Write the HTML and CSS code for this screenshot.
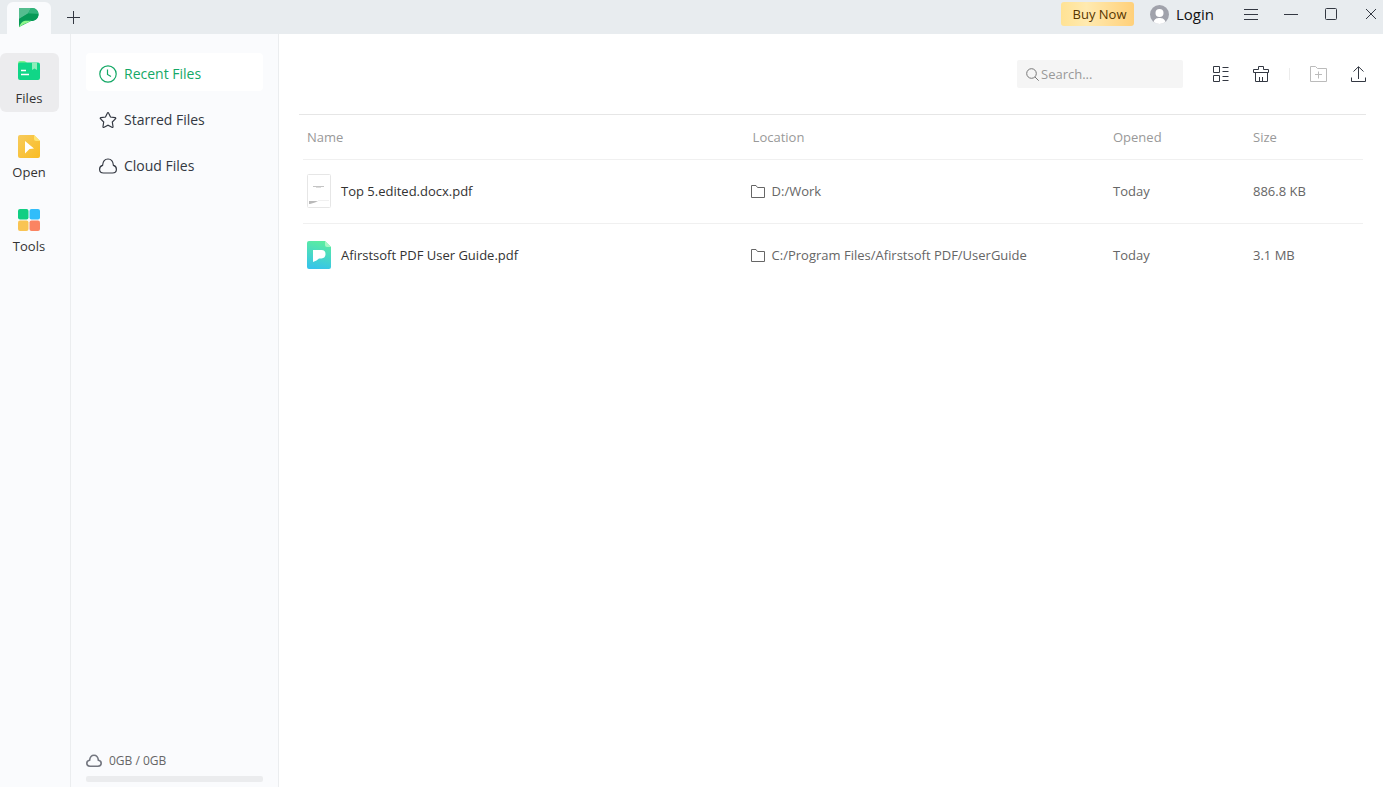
FILE: index.html
```html
<!DOCTYPE html>
<html lang="en">
<head>
<meta charset="utf-8">
<meta name="viewport" content="width=device-width, initial-scale=1">
<title>Afirstsoft PDF</title>
<link rel="stylesheet" href="styles.css">
</head>
<body>
<div class="app">
  <header class="titlebar">
    <button class="home-tab" aria-label="Home">
      <svg width="20" height="20" viewBox="0 0 20 20">
        <path d="M0 0H13C17 0 19.500 3 19.500 6.500C19.500 10.500 16 13 12 13H6L1 18L0 19Z" fill="#14a865"/>
        <path d="M0 0H12L9 5.500L0 11Z" fill="#55bd8f"/>
        <path d="M12 0H13C17 0 19.500 3 19.500 6L9 5.500Z" fill="#30b37a"/>
        <path d="M0 11L9 5.500L19.500 6C19.500 10.500 16 13 12 13L0 19Z" fill="#079a57"/>
        <path d="M0 19.500C1 16 3 13.500 6 12.800H12C9 15.500 5 15.500 2.500 17.500Z" fill="#8df58a"/>
      </svg>
    </button>
    <button class="icon-button new-tab" aria-label="New tab">
      <svg width="13" height="13" viewBox="0 0 13 13" class="line"><path d="M6.500 0V13M0 6.500H13"/></svg>
    </button>
    <div class="account">
      <button class="buy">Buy Now</button>
      <button class="login">
        <svg width="19" height="19" viewBox="0 0 19 19">
          <circle cx="9.500" cy="9.500" r="9.500" fill="#a0a2ab"/>
          <circle cx="9.500" cy="8" r="4" fill="#fff"/>
          <path d="M3.500 17C4.500 13.500 7 13 9.500 13S14.500 13.500 15.500 17Q9.500 21 3.500 17Z" fill="#fff"/>
        </svg>
        Login
      </button>
    </div>
    <div class="window-controls">
      <button class="icon-button" aria-label="Menu"><svg width="14" height="12" viewBox="0 0 14 12" class="line"><path d="M0 1.500H14M0 6.500H14M0 11.500H14"/></svg></button>
      <button class="icon-button" aria-label="Minimize"><svg width="14" height="12" viewBox="0 0 14 12" class="line"><path d="M0 6.500H14"/></svg></button>
      <button class="icon-button" aria-label="Maximize"><svg width="12" height="12" viewBox="0 0 12 12" class="line"><rect x=".5" y=".5" width="11" height="11" rx="1"/></svg></button>
      <button class="icon-button" aria-label="Close"><svg width="10" height="10" viewBox="0 0 10 10" class="line"><path d="M0 0L10 10M10 0L0 10"/></svg></button>
    </div>
  </header>

  <div class="workspace">
    <nav class="rail" aria-label="Sections">
      <button class="rail-item active">
        <svg width="22" height="20" viewBox="0 0 22 20">
          <path d="M0 2Q0 0 2 0H6Q7 0 8 1L9 2V6H0Z" fill="#7cf58e"/>
          <path d="M0 3.500Q0 1.500 2 1.500H20Q22 1.500 22 3.500V17Q22 19 20 19H2Q0 19 0 17Z" fill="#10d687"/>
          <path d="M14 1.500H19V9L16.500 7.500L14 9Z" fill="#8deebb"/>
          <path d="M3 9.500H8M3 13.500H11" stroke="#fff" stroke-width="1.500" fill="none"/>
        </svg>
        Files
      </button>
      <button class="rail-item">
        <svg width="22" height="23" viewBox="0 0 22 23">
          <defs><linearGradient id="gold" x1="0" y1="0" x2="1" y2="1"><stop offset="0" stop-color="#f7cb5d"/><stop offset="1" stop-color="#fabc22"/></linearGradient></defs>
          <path d="M2 0H16L22 6V21Q22 23 20 23H2Q0 23 0 21V2Q0 0 2 0Z" fill="url(#gold)"/>
          <path d="M16 0L22 6H18Q16 6 16 4Z" fill="#ffe470"/>
          <path d="M7 6L16 13.500L11.500 14L7 18.500Z" fill="#fff"/>
        </svg>
        Open
      </button>
      <button class="rail-item">
        <svg width="22" height="22" viewBox="0 0 22 22">
          <rect width="10.500" height="10.500" rx="2" fill="#10ce83"/>
          <rect x="11.500" width="10.500" height="10.500" rx="2" fill="#31bdfa"/>
          <rect y="11.500" width="10.500" height="10.500" rx="2" fill="#f9c454"/>
          <rect x="11.500" y="11.500" width="10.500" height="10.500" rx="2" fill="#fb8462"/>
        </svg>
        Tools
      </button>
    </nav>

    <aside class="sidebar">
      <nav class="places" aria-label="Files">
        <a class="place active" href="#recent">
          <svg width="18" height="18" viewBox="0 0 18 18" class="line medium"><circle cx="9" cy="9" r="8.200"/><path d="M8.500 4.500V9.500L12 11.500"/></svg>
          Recent Files
        </a>
        <a class="place" href="#starred">
          <svg width="18" height="18" viewBox="0 0 18 18" class="line medium"><path d="M9 1.500Q9.400 1.500 9.700 2.200L11.500 6L16 6.700Q17.300 7 16.400 7.900L13.300 11L14 15.500Q14.100 16.900 12.900 16.300L9 14.200L5.100 16.300Q3.900 16.900 4 15.500L4.700 11L1.600 7.900Q.7 7 2 6.700L6.500 6L8.300 2.200Q8.600 1.500 9 1.500Z"/></svg>
          Starred Files
        </a>
        <a class="place" href="#cloud">
          <svg width="18" height="16" viewBox="0 0 18 16" class="line medium"><path d="M4.500 15C2 15 .6 13.300 .6 11.200C.6 9.200 2 7.700 3.600 7.300C3.900 3.500 6 1 9 1S14.100 3.500 14.400 7.300C16 7.700 17.400 9.200 17.400 11.200C17.400 13.300 16 15 13.500 15Z"/></svg>
          Cloud Files
        </a>
      </nav>
      <div class="storage">
        <div class="storage-label">
          <svg width="16" height="14" viewBox="0 0 16 14" class="line bold"><path d="M4 12.200C2 12.200 .8 11 .8 9.300C.8 7.600 2 6.400 3.600 6.200C4 3.300 5.600 1.300 8 1.300S12 3.300 12.400 6.200C14 6.400 15.200 7.600 15.200 9.300C15.200 11 14 12.200 12 12.200Z"/></svg>
          0GB / 0GB
        </div>
        <div class="meter"></div>
      </div>
    </aside>

    <main class="content">
      <div class="toolbar">
        <label class="search">
          <svg width="13" height="13" viewBox="0 0 13 13" class="line"><circle cx="5.500" cy="5.500" r="4.800"/><path d="M9 9L12.700 12.700"/></svg>
          <input type="text" placeholder="Search..." aria-label="Search">
        </label>
        <button class="icon-button" aria-label="List view"><svg width="16" height="16" viewBox="0 0 16 16" class="line"><path d="M.5 .5H6.500V6.500H.5ZM.5 9.500H6.500V15.500H.5ZM9.500 1.500H15.500M9.500 5.500H15.500M9.500 10.500H15.500M9.500 14.500H15.500"/></svg></button>
        <button class="icon-button" aria-label="Clear list"><svg width="16" height="16" viewBox="0 0 16 16" class="line"><path d="M.5 6.500V3.500H5.500V.5H10.500V3.500H15.500V6.500ZM2.500 6.500V15.500H14.500V6.500M6.500 11V15.500M9.500 11V15.500"/></svg></button>
        <span class="divider"></span>
        <button class="icon-button" aria-label="New folder" disabled><svg width="17" height="16" viewBox="0 0 17 16" class="line"><path d="M.5 .5H5.500L7.500 2.500H16.500V15.500H.5ZM8.500 5.500V12.500M5 8.500H12"/></svg></button>
        <button class="icon-button" aria-label="Upload"><svg width="15" height="16" viewBox="0 0 15 16" class="line"><path d="M.5 11.500V15.500H14.500V11.500M7.500 13V1M2.500 5.500L7.500 .7L12.500 5.500"/></svg></button>
      </div>
      <div class="files">
        <table>
          <thead>
            <tr><th class="col-name">Name</th><th class="col-location">Location</th><th class="col-opened">Opened</th><th class="col-size">Size</th></tr>
          </thead>
          <tbody>
            <tr>
              <td><div class="file">
                <svg width="24" height="34" viewBox="0 0 24 34"><rect x=".5" y=".5" width="23" height="33" rx="1" fill="#fff" stroke="#e6e6e6"/><path d="M6 12.500H17" stroke="#c4c4c4"/><path d="M9 13.500H14" stroke="#ddd"/><path d="M2 27H11L8 28.500L3 30H2Z" fill="#b9b9b9"/><path d="M11 26.500H22" stroke="#f0f0f0"/></svg>
                Top 5.edited.docx.pdf
              </div></td>
              <td><div class="location"><svg width="14" height="13" viewBox="0 0 14 13" class="line"><path d="M.5 .5H5L6.500 2.500H13.500V12.500H.5Z"/></svg>D:/Work</div></td>
              <td>Today</td>
              <td>886.8 KB</td>
            </tr>
            <tr>
              <td><div class="file">
                <svg width="24" height="28" viewBox="0 0 24 28">
                  <defs><linearGradient id="guide" x1=".6" y1="0" x2=".4" y2="1"><stop offset="0" stop-color="#5ceda0"/><stop offset="1" stop-color="#36c4ea"/></linearGradient></defs>
                  <path d="M2 0H18L24 6V26Q24 28 22 28H2Q0 28 0 26V2Q0 0 2 0Z" fill="url(#guide)"/>
                  <path d="M18 0L24 6H20Q18 6 18 4Z" fill="#a8f7c4"/>
                  <path d="M6 9H14.500Q18.500 9 18.500 13T14.500 17.500H12Q10 19.500 6 21Z" fill="#fff"/>
                </svg>
                Afirstsoft PDF User Guide.pdf
              </div></td>
              <td><div class="location"><svg width="14" height="13" viewBox="0 0 14 13" class="line"><path d="M.5 .5H5L6.500 2.500H13.500V12.500H.5Z"/></svg>C:/Program Files/Afirstsoft PDF/UserGuide</div></td>
              <td>Today</td>
              <td>3.1 MB</td>
            </tr>
          </tbody>
        </table>
      </div>
    </main>
  </div>
</div>
</body>
</html>
```
FILE: styles.css
```css
* { box-sizing: border-box; }

body {
  margin: 0;
  font: 13px/20px "Open Sans", "Noto Sans", sans-serif;
  color: #333;
  background: #fff;
}

button, input { font: inherit; color: inherit; }

button {
  border: 0;
  padding: 0;
  background: none;
}

svg { display: block; flex: none; }

.line { fill: none; stroke: currentColor; stroke-width: 1; }
.medium { stroke-width: 1.2; }
.bold { stroke-width: 1.6; }

.app {
  display: flex;
  flex-direction: column;
  min-height: 100vh;
}

.titlebar {
  display: flex;
  align-items: flex-start;
  height: 34px;
  padding-left: 7px;
  background: #e8ecef;
}

.home-tab {
  display: flex;
  justify-content: center;
  width: 44px;
  height: 32px;
  margin-top: 2px;
  padding-top: 6px;
  border-radius: 6px 6px 0 0;
  background: #fafbfd;
}

.icon-button {
  display: grid;
  place-items: center;
  width: 24px;
  height: 28px;
  color: #333842;
}

.icon-button:disabled { color: #bbb; }

.new-tab { margin: 3px 0 0 10px; }

.account {
  display: flex;
  align-items: center;
  gap: 16px;
  height: 28px;
  margin-left: auto;
}

.buy {
  width: 73px;
  height: 24px;
  padding-left: 4px;
  border-radius: 3px;
  background: linear-gradient(90deg, #ffe294, #ffeab0 35%, #ffd07a);
  color: #573600;
}

.login {
  display: flex;
  align-items: center;
  gap: 7px;
  font-size: 15px;
  color: #111;
}

.window-controls {
  display: flex;
  gap: 16px;
  margin-left: 25px;
}

.workspace { display: flex; flex: 1; }

.rail {
  display: flex;
  flex-direction: column;
  gap: 15px;
  width: 71px;
  padding-top: 19px;
  border-right: 1px solid #ebedef;
  background: #fafbfd;
}

.rail-item {
  display: flex;
  flex-direction: column;
  align-items: center;
  justify-content: space-between;
  width: 59px;
  height: 59px;
  padding: 8px 1px 4px 0;
  border-radius: 6px;
}

.rail-item.active { background: #ececee; }

.sidebar {
  display: flex;
  flex-direction: column;
  justify-content: space-between;
  width: 208px;
  padding: 19px 15px 5px;
  border-right: 1px solid #ebedef;
  background: #fafbfd;
}

.places { display: flex; flex-direction: column; gap: 8px; }

.place {
  display: flex;
  align-items: center;
  gap: 7px;
  height: 38px;
  padding: 3px 12px 0 13px;
  border-radius: 4px;
  font-size: 14px;
  color: #333842;
  text-decoration: none;
}

.place.active { background: #fff; color: #14a866; }

.storage-label {
  display: flex;
  align-items: center;
  gap: 7px;
  margin-bottom: 5px;
  font-size: 12px;
  color: #666;
}

.storage-label svg { color: #747780; }

.meter { height: 6px; border-radius: 2px; background: #ebecee; }

.content { flex: 1; min-width: 0; padding: 26px 17px 0 20px; }

.toolbar {
  display: flex;
  align-items: center;
  justify-content: flex-end;
  gap: 16px;
  height: 28px;
  margin: 0 -4px 26px 0;
}

.search {
  display: flex;
  align-items: center;
  gap: 2px;
  width: 166px;
  height: 28px;
  margin-right: 10px;
  padding: 0 9px;
  border-radius: 2px;
  background: #f5f5f5;
  color: #777;
}

.search input {
  flex: 1;
  min-width: 0;
  padding: 0;
  border: 0;
  outline: 0;
  background: none;
}

.search input::placeholder { color: #999; }

.divider { width: 1px; height: 12px; background: #ececec; }

.files { padding: 0 3px 0 4px; border-top: 1px solid #e6e6e6; }

table { width: 100%; border-collapse: collapse; table-layout: fixed; }

th, td {
  padding: 0 4px;
  border-bottom: 1px solid #f0f0f0;
  text-align: left;
  font-weight: 400;
}

th { height: 44px; color: #999; }
td { height: 64px; color: #666; }

tbody tr:last-child td { border-bottom: 0; }

.col-location { width: 34%; }
.col-opened { width: 140px; }
.col-size { width: 114px; }

.file { display: flex; align-items: center; gap: 10px; color: #333; }
.location { display: flex; align-items: center; gap: 7px; margin-left: -2px; }
```
